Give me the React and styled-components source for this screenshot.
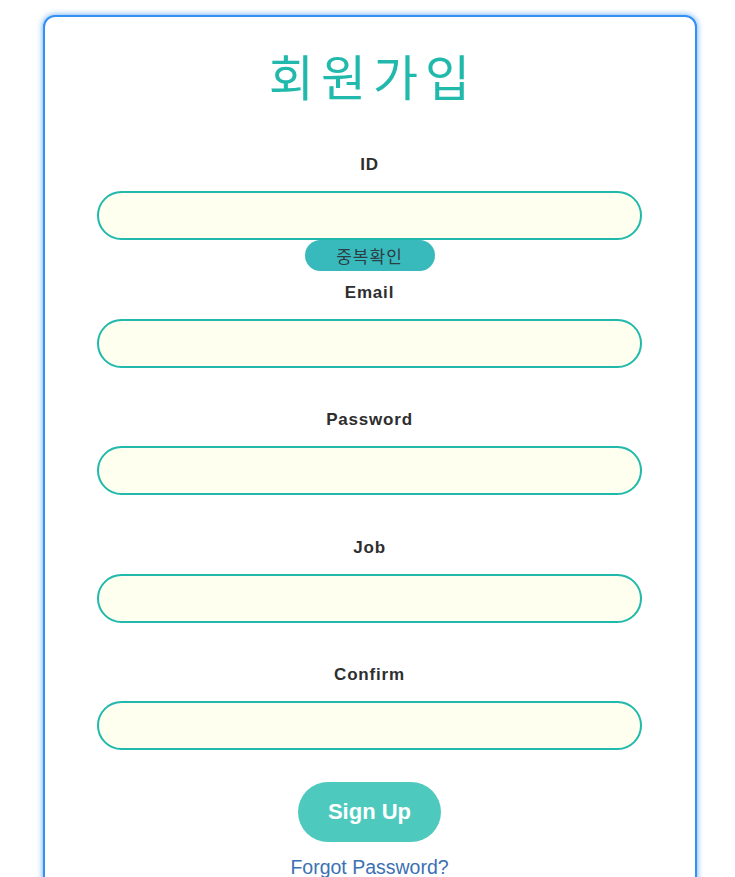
import styled, { createGlobalStyle } from "styled-components";

const GlobalStyle = createGlobalStyle`
  body {
    margin: 8px;
    background: #ffffff;
    font-family: "Liberation Sans", Arial, "Noto Sans CJK KR", sans-serif;
  }
`;

const Card = styled.div`
  box-sizing: border-box;
  width: 654px;
  margin: 7px 0 0 35px;
  padding: 0 53px 40px 52px;
  border: 2px solid #3490f2;
  border-radius: 12px;
  box-shadow: 0 0 6px rgba(52, 144, 242, 0.8);
  background: #ffffff;
  display: flex;
  flex-direction: column;
  align-items: stretch;
`;

const Title = styled.h1`
  margin: 29px 0 0;
  padding-left: 7px;
  font-family: "Noto Sans CJK KR", sans-serif;
  font-weight: 400;
  font-size: 49px;
  line-height: 58px;
  letter-spacing: 7px;
  color: #20b9ab;
  text-align: center;
`;

const Field = styled.div`
  display: flex;
  flex-direction: column;
  align-items: center;
  margin-top: ${({ $first }) => ($first ? "51px" : "42.4px")};
`;

const Label = styled.label`
  font-size: 17px;
  line-height: 20px;
  font-weight: 700;
  letter-spacing: 0.8px;
  color: #2e2e2e;
  margin-bottom: 16px;
`;

const Input = styled.input`
  box-sizing: border-box;
  width: 100%;
  height: 49px;
  border: 2px solid #20b9ab;
  border-radius: 25px;
  background: #fffff0;
  outline: none;
  padding: 0 20px;
  font-size: 16px;
`;

const CheckButton = styled.button`
  width: 130px;
  height: 31px;
  border: none;
  border-radius: 16px;
  background: #38b9bc;
  color: #2c3e44;
  font-family: "Noto Sans CJK KR", sans-serif;
  font-size: 17px;
  letter-spacing: 1px;
  padding: 0;
`;

const IdGroup = styled(Field)`
  & + ${Field} {
    margin-top: 12px;
  }
`;

const SubmitButton = styled.button`
  align-self: center;
  width: 143px;
  height: 60px;
  margin-top: 32px;
  border: none;
  border-radius: 30px;
  background: #4ec9be;
  color: #ffffff;
  font-family: "Liberation Sans", Arial, sans-serif;
  font-size: 22px;
  font-weight: 700;
`;

const ForgotLink = styled.a`
  align-self: center;
  margin-top: 14px;
  font-size: 19.5px;
  line-height: 22px;
  color: #3b70b3;
  text-decoration: none;
`;

const fields = ["Email", "Password", "Job", "Confirm"];

export default function App() {
  return (
    <>
      <GlobalStyle />
      <Card>
        <Title>회원가입</Title>
        <IdGroup $first>
          <Label>ID</Label>
          <Input type="text" />
          <CheckButton type="button">중복확인</CheckButton>
        </IdGroup>
        {fields.map((name) => (
          <Field key={name}>
            <Label>{name}</Label>
            <Input type={name === "Password" || name === "Confirm" ? "password" : "text"} />
          </Field>
        ))}
        <SubmitButton type="button">Sign Up</SubmitButton>
        <ForgotLink href="#">Forgot Password?</ForgotLink>
      </Card>
    </>
  );
}
